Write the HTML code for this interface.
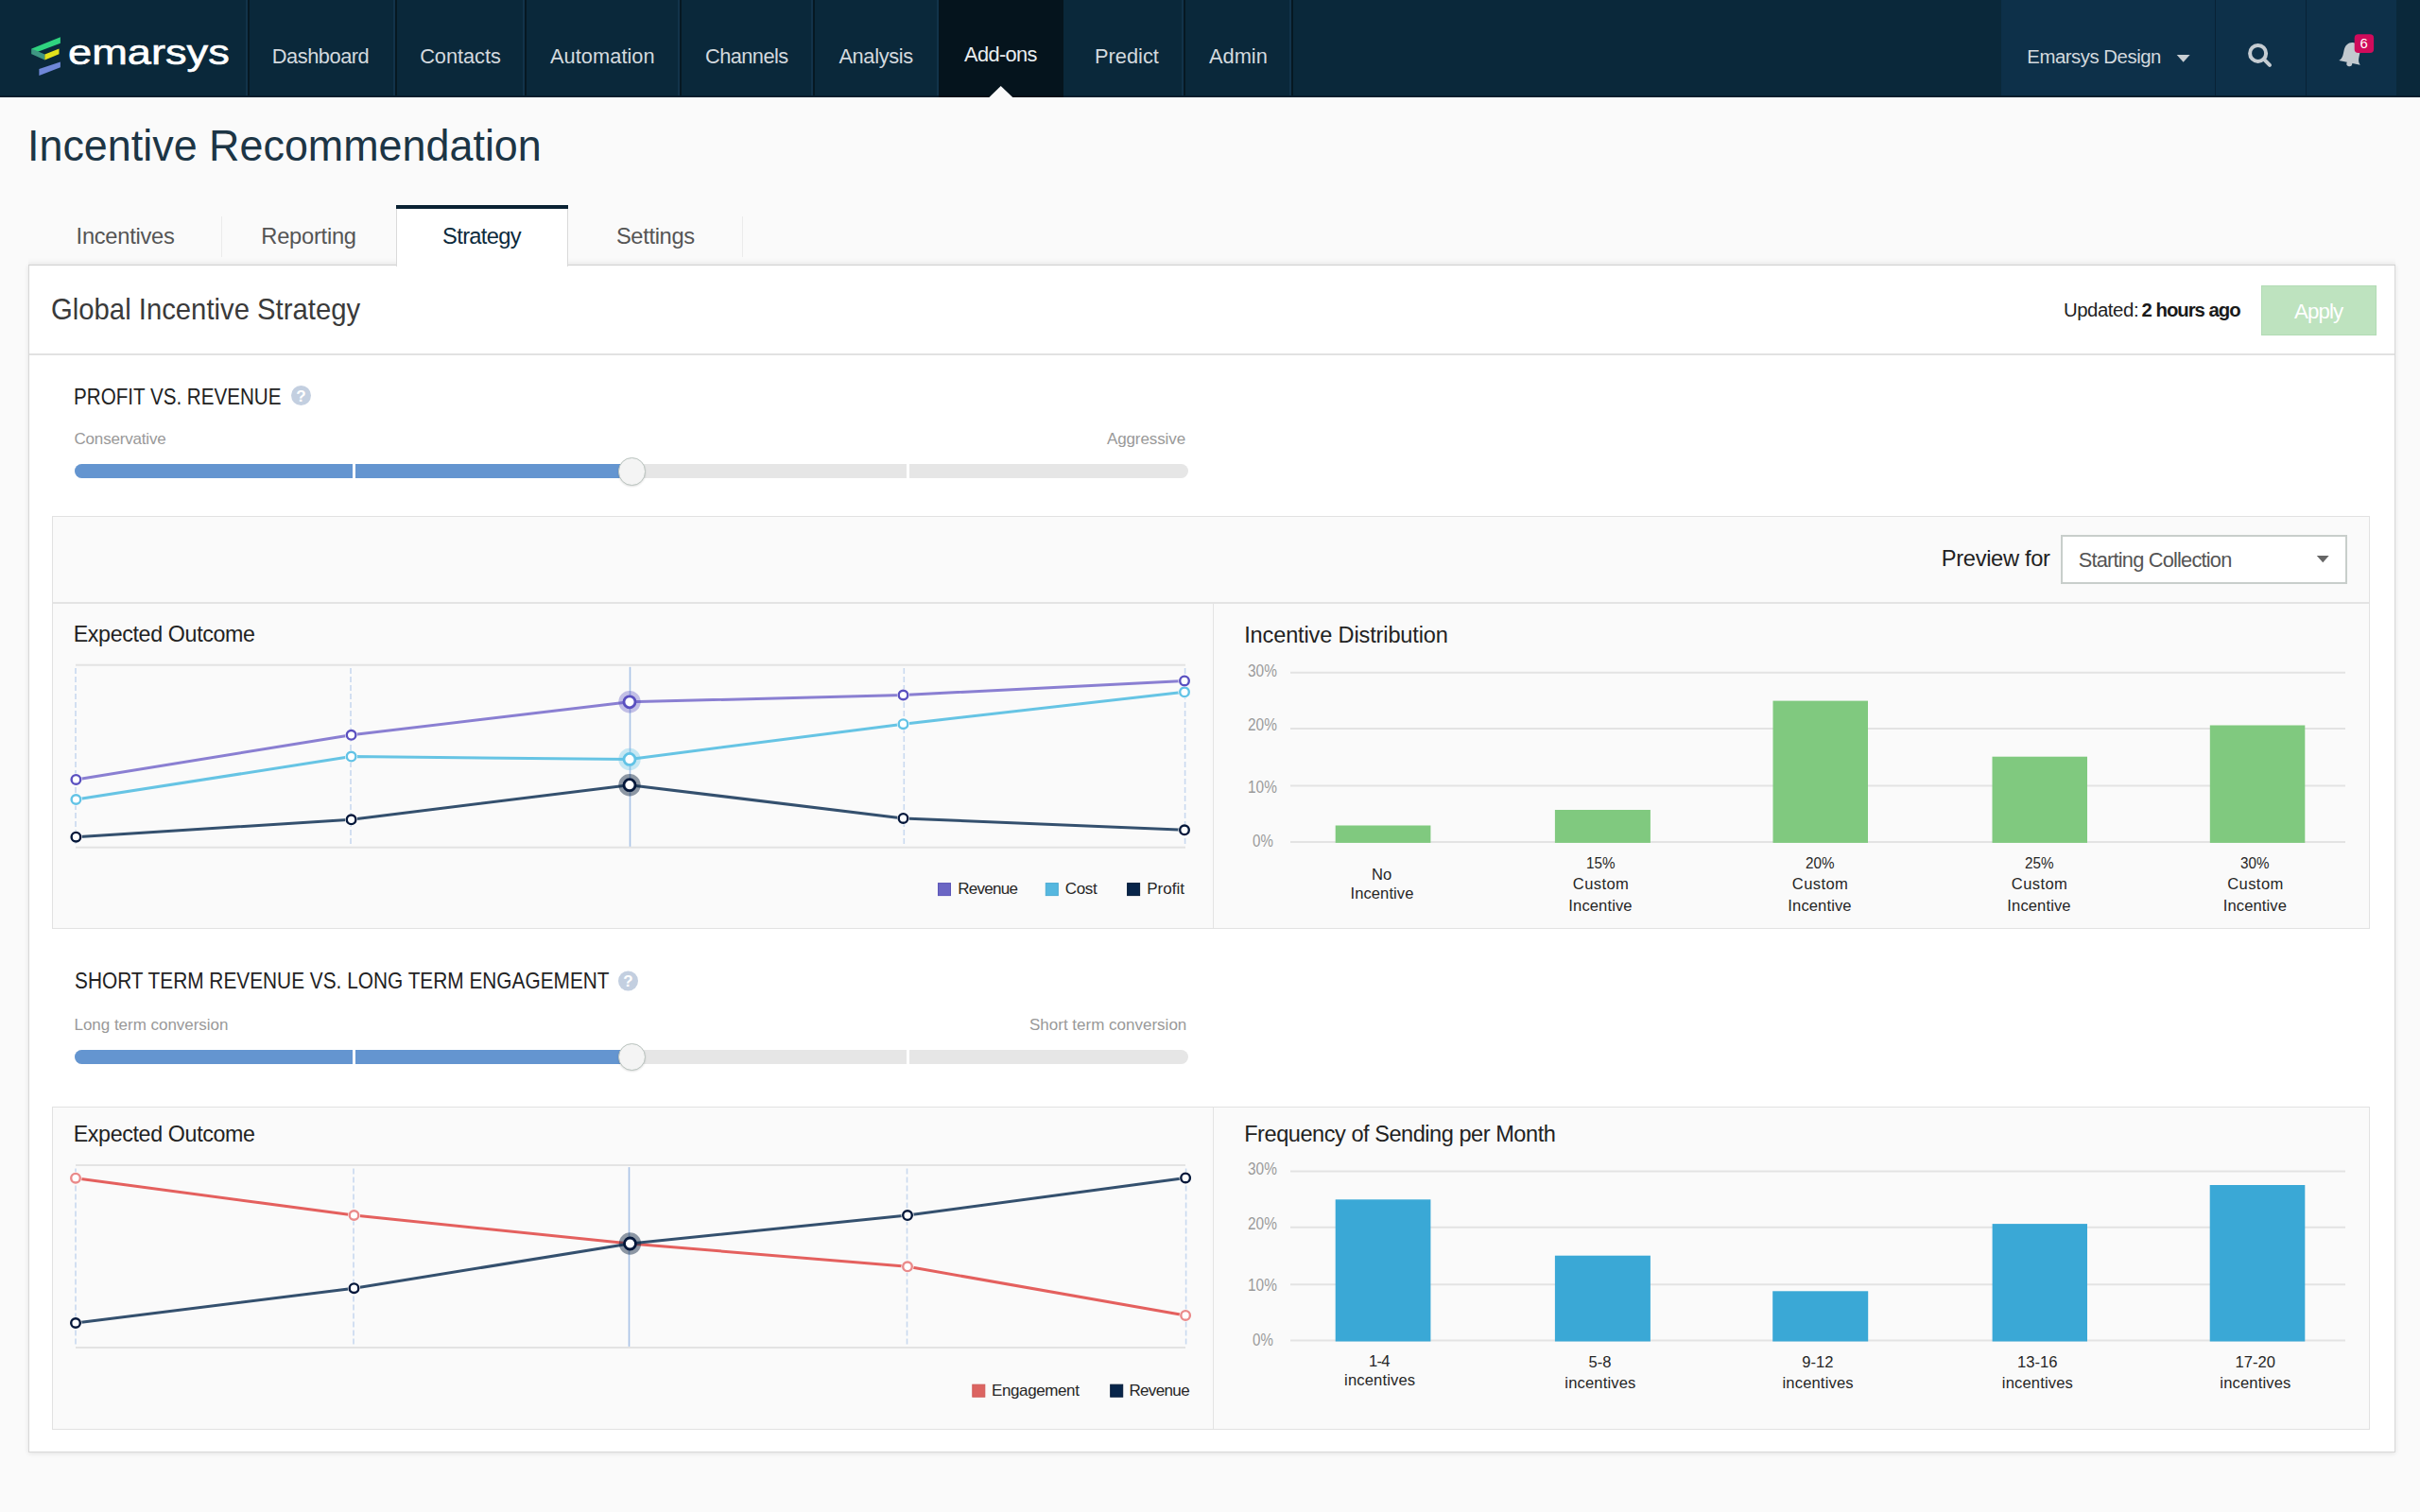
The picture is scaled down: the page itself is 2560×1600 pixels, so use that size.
<!DOCTYPE html>
<html><head><meta charset="utf-8"><title>Incentive Recommendation</title>
<style>
html,body{margin:0;padding:0}
body{width:2560px;height:1600px;overflow:hidden;background:#fafafa;font-family:"Liberation Sans",sans-serif;position:relative}
.a{position:absolute;box-sizing:border-box}
.t{position:absolute;white-space:nowrap;line-height:1;transform-origin:0 0}
svg{position:absolute;left:0;top:0}
</style></head><body>
<div class="a" style="left:0;top:0;width:2560px;height:103px;background:#0a283a"></div>
<div class="a" style="left:993px;top:0;width:132px;height:101px;background:#05141d"></div>
<div class="a" style="left:2117px;top:0;width:418px;height:101px;background:#0d3049"></div>
<div class="a" style="left:0;top:101px;width:2560px;height:2px;background:#031e2d"></div>
<div class="a" style="left:993px;top:101px;width:132px;height:2px;background:#020f17"></div>
<div class="a" style="left:260px;top:0;width:2px;height:101px;background:#12334a"></div>
<div class="a" style="left:262px;top:0;width:2px;height:101px;background:#061822"></div>
<div class="a" style="left:416px;top:0;width:2px;height:101px;background:#12334a"></div>
<div class="a" style="left:418px;top:0;width:2px;height:101px;background:#061822"></div>
<div class="a" style="left:553px;top:0;width:2px;height:101px;background:#12334a"></div>
<div class="a" style="left:555px;top:0;width:2px;height:101px;background:#061822"></div>
<div class="a" style="left:717px;top:0;width:2px;height:101px;background:#12334a"></div>
<div class="a" style="left:719px;top:0;width:2px;height:101px;background:#061822"></div>
<div class="a" style="left:858px;top:0;width:2px;height:101px;background:#12334a"></div>
<div class="a" style="left:860px;top:0;width:2px;height:101px;background:#061822"></div>
<div class="a" style="left:1250px;top:0;width:2px;height:101px;background:#12334a"></div>
<div class="a" style="left:1252px;top:0;width:2px;height:101px;background:#061822"></div>
<div class="a" style="left:1364px;top:0;width:2px;height:101px;background:#12334a"></div>
<div class="a" style="left:1366px;top:0;width:2px;height:101px;background:#061822"></div>
<div class="a" style="left:991px;top:0;width:2px;height:101px;background:#12334a"></div>
<div class="a" style="left:2343px;top:0;width:1px;height:101px;background:#082236"></div>
<div class="a" style="left:2439px;top:0;width:1px;height:101px;background:#082236"></div>
<svg width="2560" height="110" viewBox="0 0 2560 110">
<polygon points="33.5,51.5 63.9,39.3 63.9,45.7 33.5,57.3" fill="#2fd37f"/>
<polygon points="33.5,51.5 33.5,57.3 47.4,63.4 47.4,57.6" fill="#3f9683"/>
<polygon points="47.4,57.6 62.5,51.5 62.5,57.3 47.4,63.4" fill="#e3e11b"/>
<polygon points="41.4,72.9 63.9,65.4 63.9,71.2 41.4,80" fill="#6f87d9"/>
<polygon points="1046.4,103 1058.7,91 1071.3,103" fill="#fafafa"/>
<polygon points="2302.7,57.9 2316.6,57.9 2309.65,65.7" fill="#c8ced3"/>
<circle cx="2388.6" cy="56.4" r="8.5" fill="none" stroke="#c5ccd2" stroke-width="4"/>
<line x1="2395.3" y1="63.1" x2="2401" y2="68.8" stroke="#c5ccd2" stroke-width="4" stroke-linecap="round"/>
<g transform="translate(1.5 0) rotate(12 2486 57)"><path d="M2474.5,66.5 C2477,64.5 2477.5,62 2477.5,58 L2477.5,55 C2477.5,49 2481,45 2486,45 C2491,45 2494.5,49 2494.5,55 L2494.5,58 C2494.5,62 2495,64.5 2497.5,66.5 Z" fill="#c2c9cf"/>
<circle cx="2486" cy="67.5" r="3" fill="#c2c9cf"/></g>
<rect x="2490.7" y="36.2" width="20.4" height="19.7" rx="4" fill="#d00b5b"/>
</svg>
<div class="t" style="left:71.54px;top:37.9px;font-size:36.77px;color:#ffffff;transform:scaleX(1.2296);-webkit-text-stroke:0.6px #fff">emarsys</div>
<div class="t" style="left:287.8px;top:48.8px;font-size:21.8px;color:#d3d9de;letter-spacing:-0.463px;">Dashboard</div>
<div class="t" style="left:444.2px;top:48.8px;font-size:21.8px;color:#d3d9de;letter-spacing:-0.057px;">Contacts</div>
<div class="t" style="left:582.0px;top:48.8px;font-size:21.8px;color:#d3d9de;letter-spacing:0.044px;">Automation</div>
<div class="t" style="left:746.0px;top:48.8px;font-size:21.8px;color:#d3d9de;letter-spacing:-0.571px;">Channels</div>
<div class="t" style="left:887.4px;top:48.8px;font-size:21.8px;color:#d3d9de;letter-spacing:-0.343px;">Analysis</div>
<div class="t" style="left:1020.0px;top:47.1px;font-size:21.8px;color:#e9edf0;letter-spacing:-0.617px;">Add-ons</div>
<div class="t" style="left:1158.0px;top:48.8px;font-size:21.8px;color:#d3d9de;">Predict</div>
<div class="t" style="left:1279.0px;top:48.8px;font-size:21.8px;color:#d3d9de;">Admin</div>
<div class="t" style="left:2144.3px;top:49.5px;font-size:20.35px;color:#d3d9de;letter-spacing:-0.462px;">Emarsys Design</div>
<div class="t" style="left:2496.5px;top:39.2px;font-size:14.83px;color:#ffffff;">6</div>
<div class="t" style="left:29.49px;top:129.6px;font-size:47.09px;color:#1c3545;transform:scaleX(0.9532);">Incentive Recommendation</div>
<div class="a" style="left:234px;top:229px;width:1px;height:43px;background:#ebebeb"></div>
<div class="a" style="left:785px;top:229px;width:1px;height:43px;background:#ebebeb"></div>
<div class="a" style="left:30px;top:280px;width:2504px;height:1257px;background:#fff;border:1.5px solid #d8d8d8;box-shadow:0 1px 5px rgba(0,0,0,0.10)"></div>
<div class="a" style="left:30px;top:272px;width:2504px;height:9px;background:linear-gradient(rgba(0,0,0,0),rgba(0,0,0,0.035))"></div>
<div class="a" style="left:419px;top:221px;width:182px;height:61px;background:#fff;border-left:1px solid #dadada;border-right:1px solid #dadada"></div>
<div class="a" style="left:419px;top:217px;width:182px;height:4px;background:#0a2233"></div>
<div class="t" style="left:80.6px;top:238.8px;font-size:23.69px;color:#555555;letter-spacing:-0.278px;">Incentives</div>
<div class="t" style="left:276.3px;top:238.8px;font-size:23.69px;color:#555555;letter-spacing:-0.25px;">Reporting</div>
<div class="t" style="left:468.1px;top:238.5px;font-size:23.69px;color:#0c2a3c;letter-spacing:-0.671px;">Strategy</div>
<div class="t" style="left:651.9px;top:238.8px;font-size:23.69px;color:#555555;letter-spacing:-0.343px;">Settings</div>
<div class="t" style="left:53.96px;top:311.9px;font-size:31.1px;color:#3a3a3a;transform:scaleX(0.9416);">Global Incentive Strategy</div>
<div class="a" style="left:31px;top:374px;width:2502px;height:2px;background:#e2e2e2"></div>
<div class="t" style="left:2182.9px;top:317.5px;font-size:20.35px;color:#222;letter-spacing:-0.414px;">Updated:</div>
<div class="t" style="left:2265.6px;top:317.5px;font-size:20.35px;color:#1a1a1a;font-weight:700;letter-spacing:-1.03px;">2 hours ago</div>
<div class="a" style="left:2392px;top:301.5px;width:121.5px;height:53px;background:#bee3bf;border:1px solid #b2dbb4"></div>
<div class="t" style="left:2427.0px;top:318.6px;font-size:22.24px;color:#ffffff;letter-spacing:-0.875px;">Apply</div>
<div class="t" style="left:77.76px;top:408.7px;font-size:23.69px;color:#222;transform:scaleX(0.87);">PROFIT VS. REVENUE</div>
<div class="t" style="left:78.5px;top:456.0px;font-size:17.01px;color:#999999;letter-spacing:-0.182px;">Conservative</div>
<div class="t" style="left:1170.9px;top:456.0px;font-size:17.01px;color:#999999;letter-spacing:-0.1px;">Aggressive</div>
<svg width="2560" height="1600" style="pointer-events:none"><circle cx="318.5" cy="418.5" r="10.5" fill="#c3cfe0"/><text x="318.5" y="424.5" font-family="Liberation Sans" font-weight="700" font-size="17" fill="#fff" text-anchor="middle">?</text></svg>
<div class="a" style="left:79px;top:491.3px;width:1178px;height:15px;border-radius:7.5px;background:#e6e6e6;overflow:hidden"><div class="a" style="left:0;top:0;width:590px;height:15px;background:#6495d0"></div><div class="a" style="left:294px;top:0;width:3px;height:15px;background:#fff"></div><div class="a" style="left:880px;top:0;width:3px;height:15px;background:#fff"></div></div>
<div class="a" style="left:653.5px;top:484.3px;width:29.5px;height:29.5px;border-radius:50%;background:#f4f4f4;border:1.5px solid #b8c2bd;box-shadow:0 1px 2px rgba(0,0,0,0.12)"></div>
<div class="a" style="left:55px;top:546px;width:2452px;height:437px;background:#fafafa;border:1.5px solid #e2e2e2"></div>
<div class="a" style="left:56px;top:637px;width:2450px;height:1.5px;background:#e3e3e3"></div>
<div class="a" style="left:1282.5px;top:638px;width:1.5px;height:344px;background:#e3e3e3"></div>
<div class="t" style="left:2053.8px;top:580.1px;font-size:23.69px;color:#222;letter-spacing:-0.33px;">Preview for</div>
<div class="a" style="left:2180.3px;top:565.7px;width:302.4px;height:52.4px;background:#fff;border:2px solid #c8cecb"></div>
<div class="t" style="left:2198.7px;top:581.6px;font-size:21.8px;color:#555555;letter-spacing:-0.794px;">Starting Collection</div>
<svg width="2560" height="1600"><polygon points="2450.8,588 2463.7,588 2457.25,595.3" fill="#666"/></svg>
<div class="t" style="left:77.7px;top:660.0px;font-size:23.26px;color:#222;letter-spacing:-0.36px;">Expected Outcome</div>
<div class="t" style="left:1316.2px;top:660.5px;font-size:23.55px;color:#222;letter-spacing:-0.138px;">Incentive Distribution</div>
<div class="t" style="left:78.62px;top:1027.4px;font-size:23.69px;color:#222;transform:scaleX(0.8793);">SHORT TERM REVENUE VS. LONG TERM ENGAGEMENT</div>
<div class="t" style="left:78.5px;top:1076.0px;font-size:17.01px;color:#999999;letter-spacing:-0.026px;">Long term conversion</div>
<div class="t" style="left:1089.0px;top:1076.0px;font-size:17.01px;color:#999999;">Short term conversion</div>
<svg width="2560" height="1600" style="pointer-events:none"><circle cx="664.5" cy="1038.0" r="10.5" fill="#c3cfe0"/><text x="664.5" y="1044.0" font-family="Liberation Sans" font-weight="700" font-size="17" fill="#fff" text-anchor="middle">?</text></svg>
<div class="a" style="left:79px;top:1110.8px;width:1178px;height:15px;border-radius:7.5px;background:#e6e6e6;overflow:hidden"><div class="a" style="left:0;top:0;width:590px;height:15px;background:#6495d0"></div><div class="a" style="left:294px;top:0;width:3px;height:15px;background:#fff"></div><div class="a" style="left:880px;top:0;width:3px;height:15px;background:#fff"></div></div>
<div class="a" style="left:653.5px;top:1103.8px;width:29.5px;height:29.5px;border-radius:50%;background:#f4f4f4;border:1.5px solid #b8c2bd;box-shadow:0 1px 2px rgba(0,0,0,0.12)"></div>
<div class="a" style="left:55px;top:1171px;width:2452px;height:342px;background:#fafafa;border:1.5px solid #e2e2e2"></div>
<div class="a" style="left:1282.5px;top:1172px;width:1.5px;height:340px;background:#e3e3e3"></div>
<div class="t" style="left:77.7px;top:1188.7px;font-size:23.26px;color:#222;letter-spacing:-0.36px;">Expected Outcome</div>
<div class="t" style="left:1316.2px;top:1188.6px;font-size:23.55px;color:#222;letter-spacing:-0.459px;">Frequency of Sending per Month</div>
<svg width="2560" height="1600"><line x1="80" y1="703.8" x2="1254" y2="703.8" stroke="#e3e3e3" stroke-width="2"/><line x1="80" y1="896.8" x2="1254" y2="896.8" stroke="#e3e3e3" stroke-width="2"/><line x1="80" y1="707.0999999999999" x2="80" y2="895.8" stroke="#c9d9ef" stroke-width="1.6" stroke-dasharray="6 3"/><line x1="371" y1="707.0999999999999" x2="371" y2="895.8" stroke="#c9d9ef" stroke-width="1.6" stroke-dasharray="6 3"/><line x1="956.3" y1="707.0999999999999" x2="956.3" y2="895.8" stroke="#c9d9ef" stroke-width="1.6" stroke-dasharray="6 3"/><line x1="1253.6" y1="707.0999999999999" x2="1253.6" y2="895.8" stroke="#c9d9ef" stroke-width="1.6" stroke-dasharray="6 3"/><line x1="666.5" y1="705.8" x2="666.5" y2="895.8" stroke="#a9c2e6" stroke-width="1.6"/><polyline points="80.4,885.7 371.6,867.3 666,830.7 955.5,865.9 1253,878.3" fill="none" stroke="#34506e" stroke-width="3" stroke-linejoin="round"/><polyline points="80.4,846 371.6,800.6 666,803.4 955.5,766.2 1253,732.3" fill="none" stroke="#66c4e4" stroke-width="3" stroke-linejoin="round"/><polyline points="80.4,824.9 371.6,777.8 666,742.8 955.5,735.5 1253,720.4" fill="none" stroke="#8a7fd2" stroke-width="3" stroke-linejoin="round"/><circle cx="80.4" cy="885.7" r="6.6" fill="#fafafa"/><circle cx="80.4" cy="885.7" r="4.8" fill="#fff" stroke="#04173a" stroke-width="2.4"/><circle cx="371.6" cy="867.3" r="6.6" fill="#fafafa"/><circle cx="371.6" cy="867.3" r="4.8" fill="#fff" stroke="#04173a" stroke-width="2.4"/><circle cx="666" cy="830.7" r="11.7" fill="rgba(8,30,60,0.45)"/><circle cx="666" cy="830.7" r="6" fill="#fff" stroke="#04173a" stroke-width="2.8"/><circle cx="955.5" cy="865.9" r="6.6" fill="#fafafa"/><circle cx="955.5" cy="865.9" r="4.8" fill="#fff" stroke="#04173a" stroke-width="2.4"/><circle cx="1253" cy="878.3" r="6.6" fill="#fafafa"/><circle cx="1253" cy="878.3" r="4.8" fill="#fff" stroke="#04173a" stroke-width="2.4"/><circle cx="80.4" cy="846" r="6.6" fill="#fafafa"/><circle cx="80.4" cy="846" r="4.8" fill="#fff" stroke="#62c3e6" stroke-width="2.4"/><circle cx="371.6" cy="800.6" r="6.6" fill="#fafafa"/><circle cx="371.6" cy="800.6" r="4.8" fill="#fff" stroke="#62c3e6" stroke-width="2.4"/><circle cx="666" cy="803.4" r="11.7" fill="rgba(98,195,230,0.35)"/><circle cx="666" cy="803.4" r="6" fill="#fff" stroke="#62c3e6" stroke-width="2.8"/><circle cx="955.5" cy="766.2" r="6.6" fill="#fafafa"/><circle cx="955.5" cy="766.2" r="4.8" fill="#fff" stroke="#62c3e6" stroke-width="2.4"/><circle cx="1253" cy="732.3" r="6.6" fill="#fafafa"/><circle cx="1253" cy="732.3" r="4.8" fill="#fff" stroke="#62c3e6" stroke-width="2.4"/><circle cx="80.4" cy="824.9" r="6.6" fill="#fafafa"/><circle cx="80.4" cy="824.9" r="4.8" fill="#fff" stroke="#5a50c0" stroke-width="2.4"/><circle cx="371.6" cy="777.8" r="6.6" fill="#fafafa"/><circle cx="371.6" cy="777.8" r="4.8" fill="#fff" stroke="#5a50c0" stroke-width="2.4"/><circle cx="666" cy="742.8" r="11.7" fill="rgba(90,80,192,0.35)"/><circle cx="666" cy="742.8" r="6" fill="#fff" stroke="#5a50c0" stroke-width="2.8"/><circle cx="955.5" cy="735.5" r="6.6" fill="#fafafa"/><circle cx="955.5" cy="735.5" r="4.8" fill="#fff" stroke="#5a50c0" stroke-width="2.4"/><circle cx="1253" cy="720.4" r="6.6" fill="#fafafa"/><circle cx="1253" cy="720.4" r="4.8" fill="#fff" stroke="#5a50c0" stroke-width="2.4"/><line x1="80" y1="1233.1" x2="1254" y2="1233.1" stroke="#e3e3e3" stroke-width="2"/><line x1="80" y1="1425.9" x2="1254" y2="1425.9" stroke="#e3e3e3" stroke-width="2"/><line x1="80" y1="1236.3999999999999" x2="80" y2="1424.9" stroke="#c9d9ef" stroke-width="1.6" stroke-dasharray="6 3"/><line x1="374" y1="1236.3999999999999" x2="374" y2="1424.9" stroke="#c9d9ef" stroke-width="1.6" stroke-dasharray="6 3"/><line x1="959.5" y1="1236.3999999999999" x2="959.5" y2="1424.9" stroke="#c9d9ef" stroke-width="1.6" stroke-dasharray="6 3"/><line x1="1254.6" y1="1236.3999999999999" x2="1254.6" y2="1424.9" stroke="#c9d9ef" stroke-width="1.6" stroke-dasharray="6 3"/><line x1="665.5" y1="1235.1" x2="665.5" y2="1424.9" stroke="#a9c2e6" stroke-width="1.6"/><polyline points="80,1246.7 374.5,1286 666.5,1316 960,1340.3 1254.1,1391.9" fill="none" stroke="#e4605e" stroke-width="3" stroke-linejoin="round"/><polyline points="80,1400 374.5,1363.2 666.5,1316 960,1286.1 1254.1,1246.4" fill="none" stroke="#34506e" stroke-width="3" stroke-linejoin="round"/><circle cx="80" cy="1246.7" r="6.6" fill="#fafafa"/><circle cx="80" cy="1246.7" r="4.8" fill="#fff" stroke="#ea8a8a" stroke-width="2.4"/><circle cx="374.5" cy="1286" r="6.6" fill="#fafafa"/><circle cx="374.5" cy="1286" r="4.8" fill="#fff" stroke="#ea8a8a" stroke-width="2.4"/><circle cx="960" cy="1340.3" r="6.6" fill="#fafafa"/><circle cx="960" cy="1340.3" r="4.8" fill="#fff" stroke="#ea8a8a" stroke-width="2.4"/><circle cx="1254.1" cy="1391.9" r="6.6" fill="#fafafa"/><circle cx="1254.1" cy="1391.9" r="4.8" fill="#fff" stroke="#ea8a8a" stroke-width="2.4"/><circle cx="80" cy="1400" r="6.6" fill="#fafafa"/><circle cx="80" cy="1400" r="4.8" fill="#fff" stroke="#04173a" stroke-width="2.4"/><circle cx="374.5" cy="1363.2" r="6.6" fill="#fafafa"/><circle cx="374.5" cy="1363.2" r="4.8" fill="#fff" stroke="#04173a" stroke-width="2.4"/><circle cx="666.5" cy="1316" r="11.7" fill="rgba(8,30,60,0.45)"/><circle cx="666.5" cy="1316" r="6" fill="#fff" stroke="#04173a" stroke-width="2.8"/><circle cx="960" cy="1286.1" r="6.6" fill="#fafafa"/><circle cx="960" cy="1286.1" r="4.8" fill="#fff" stroke="#04173a" stroke-width="2.4"/><circle cx="1254.1" cy="1246.4" r="6.6" fill="#fafafa"/><circle cx="1254.1" cy="1246.4" r="4.8" fill="#fff" stroke="#04173a" stroke-width="2.4"/><rect x="992.5" y="934.6" width="13" height="13" fill="#6b66c4" stroke="#5c56b8" stroke-width="1"/><rect x="1106.3" y="934.6" width="13" height="13" fill="#55b7df" stroke="#4aaad3" stroke-width="1"/><rect x="1192.6" y="934.6" width="13" height="13" fill="#08254a" stroke="#061c3a" stroke-width="1"/><rect x="1028.8" y="1465.2" width="13" height="13" fill="#dc6461" stroke="#d05a57" stroke-width="1"/><rect x="1174.7" y="1465.2" width="13" height="13" fill="#08254a" stroke="#061c3a" stroke-width="1"/><line x1="1365" y1="711.8" x2="2481" y2="711.8" stroke="#e3e3e3" stroke-width="2"/><line x1="1365" y1="770.9" x2="2481" y2="770.9" stroke="#e3e3e3" stroke-width="2"/><line x1="1365" y1="831.4" x2="2481" y2="831.4" stroke="#e3e3e3" stroke-width="2"/><line x1="1365" y1="890.9" x2="2481" y2="890.9" stroke="#e3e3e3" stroke-width="2"/><rect x="1412.7" y="873.5" width="100.70000000000005" height="18.399999999999977" fill="#80c97f"/><rect x="1644.9" y="857" width="101.0" height="34.89999999999998" fill="#80c97f"/><rect x="1875.5" y="741.6" width="100.5" height="150.29999999999995" fill="#80c97f"/><rect x="2107.5" y="800.7" width="100.5" height="91.19999999999993" fill="#80c97f"/><rect x="2337.8" y="767.5" width="100.5" height="124.39999999999998" fill="#80c97f"/><line x1="1365" y1="1239.5" x2="2481" y2="1239.5" stroke="#e3e3e3" stroke-width="2"/><line x1="1365" y1="1298.7" x2="2481" y2="1298.7" stroke="#e3e3e3" stroke-width="2"/><line x1="1365" y1="1359.3" x2="2481" y2="1359.3" stroke="#e3e3e3" stroke-width="2"/><line x1="1365" y1="1418.5" x2="2481" y2="1418.5" stroke="#e3e3e3" stroke-width="2"/><rect x="1412.7" y="1269.3" width="100.70000000000005" height="150.20000000000005" fill="#3aa8d6"/><rect x="1644.9" y="1328.7" width="101.0" height="90.79999999999995" fill="#3aa8d6"/><rect x="1875.2" y="1366.3" width="101.0" height="53.200000000000045" fill="#3aa8d6"/><rect x="2107.6" y="1295.1" width="100.40000000000009" height="124.40000000000009" fill="#3aa8d6"/><rect x="2337.7" y="1254" width="100.60000000000036" height="165.5" fill="#3aa8d6"/></svg>
<div class="t" style="left:1320.22px;top:701.9px;font-size:17.59px;color:#9a9a9a;transform:scaleX(0.8765);">30%</div>
<div class="t" style="left:1320.22px;top:759.3px;font-size:17.59px;color:#9a9a9a;transform:scaleX(0.8765);">20%</div>
<div class="t" style="left:1320.22px;top:824.7px;font-size:17.59px;color:#9a9a9a;transform:scaleX(0.8765);">10%</div>
<div class="t" style="left:1324.84px;top:882.3px;font-size:17.59px;color:#9a9a9a;transform:scaleX(0.8583);">0%</div>
<div class="t" style="left:1320.22px;top:1229.4px;font-size:17.59px;color:#9a9a9a;transform:scaleX(0.8765);">30%</div>
<div class="t" style="left:1320.22px;top:1286.8px;font-size:17.59px;color:#9a9a9a;transform:scaleX(0.8765);">20%</div>
<div class="t" style="left:1320.22px;top:1352.2px;font-size:17.59px;color:#9a9a9a;transform:scaleX(0.8765);">10%</div>
<div class="t" style="left:1324.84px;top:1409.8px;font-size:17.59px;color:#9a9a9a;transform:scaleX(0.8583);">0%</div>
<div class="t" style="left:1451.05px;top:917.9px;font-size:16.57px;color:#262626;letter-spacing:0.1px;">No</div>
<div class="t" style="left:1428.45px;top:937.7px;font-size:16.57px;color:#262626;letter-spacing:0.088px;">Incentive</div>
<div class="t" style="left:1677.68px;top:905.7px;font-size:16.57px;color:#262626;transform:scaleX(0.9188);">15%</div>
<div class="t" style="left:1663.75px;top:928.3px;font-size:16.57px;color:#262626;letter-spacing:0.42px;">Custom</div>
<div class="t" style="left:1659.35px;top:950.9px;font-size:16.57px;color:#262626;letter-spacing:0.113px;">Incentive</div>
<div class="t" style="left:1909.68px;top:905.7px;font-size:16.57px;color:#262626;transform:scaleX(0.9188);">20%</div>
<div class="t" style="left:1895.75px;top:928.3px;font-size:16.57px;color:#262626;letter-spacing:0.42px;">Custom</div>
<div class="t" style="left:1891.35px;top:950.9px;font-size:16.57px;color:#262626;letter-spacing:0.113px;">Incentive</div>
<div class="t" style="left:2141.68px;top:905.7px;font-size:16.57px;color:#262626;transform:scaleX(0.9188);">25%</div>
<div class="t" style="left:2127.75px;top:928.3px;font-size:16.57px;color:#262626;letter-spacing:0.42px;">Custom</div>
<div class="t" style="left:2123.35px;top:950.9px;font-size:16.57px;color:#262626;letter-spacing:0.113px;">Incentive</div>
<div class="t" style="left:2370.08px;top:905.7px;font-size:16.57px;color:#262626;transform:scaleX(0.9188);">30%</div>
<div class="t" style="left:2356.15px;top:928.3px;font-size:16.57px;color:#262626;letter-spacing:0.42px;">Custom</div>
<div class="t" style="left:2351.75px;top:950.9px;font-size:16.57px;color:#262626;letter-spacing:0.113px;">Incentive</div>
<div class="t" style="left:1448.1px;top:1433.4px;font-size:16.57px;color:#262626;letter-spacing:-0.8px;">1-4</div>
<div class="t" style="left:1422.1px;top:1452.9px;font-size:16.57px;color:#262626;letter-spacing:0.156px;">incentives</div>
<div class="t" style="left:1680.5px;top:1433.8px;font-size:16.57px;color:#262626;">5-8</div>
<div class="t" style="left:1655.3px;top:1456.2px;font-size:16.57px;color:#262626;letter-spacing:0.156px;">incentives</div>
<div class="t" style="left:1906.2px;top:1433.8px;font-size:16.57px;color:#262626;">9-12</div>
<div class="t" style="left:1885.5px;top:1456.2px;font-size:16.57px;color:#262626;letter-spacing:0.156px;">incentives</div>
<div class="t" style="left:2134.0px;top:1433.8px;font-size:16.57px;color:#262626;">13-16</div>
<div class="t" style="left:2117.8px;top:1456.2px;font-size:16.57px;color:#262626;letter-spacing:0.156px;">incentives</div>
<div class="t" style="left:2364.5px;top:1433.8px;font-size:16.57px;color:#262626;">17-20</div>
<div class="t" style="left:2348.3px;top:1456.2px;font-size:16.57px;color:#262626;letter-spacing:0.156px;">incentives</div>
<div class="t" style="left:1013.2px;top:932.1px;font-size:17.01px;color:#262626;letter-spacing:-0.717px;">Revenue</div>
<div class="t" style="left:1126.8px;top:932.1px;font-size:17.01px;color:#262626;letter-spacing:-0.367px;">Cost</div>
<div class="t" style="left:1213.3px;top:932.1px;font-size:17.01px;color:#262626;letter-spacing:-0.02px;">Profit</div>
<div class="t" style="left:1049.0px;top:1462.5px;font-size:17.01px;color:#262626;letter-spacing:-0.389px;">Engagement</div>
<div class="t" style="left:1194.4px;top:1462.5px;font-size:17.01px;color:#262626;letter-spacing:-0.633px;">Revenue</div>
</body></html>
